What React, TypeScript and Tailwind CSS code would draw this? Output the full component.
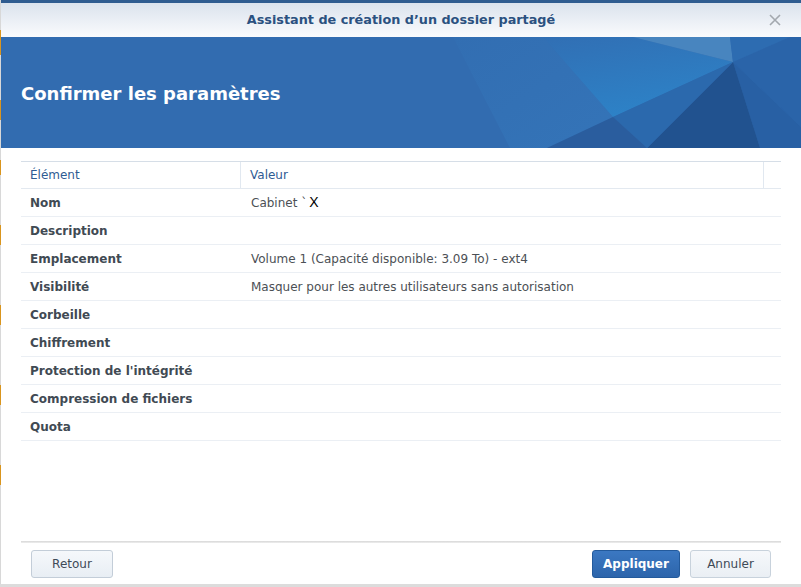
import React from "react";

const rows: [string, string, boolean?][] = [
  ["Nom", "Cabinet `", true],
  ["Description", ""],
  ["Emplacement", "Volume 1 (Capacité disponible: 3.09 To) - ext4"],
  ["Visibilité", "Masquer pour les autres utilisateurs sans autorisation"],
  ["Corbeille", ""],
  ["Chiffrement", ""],
  ["Protection de l'intégrité", ""],
  ["Compression de fichiers", ""],
  ["Quota", ""],
];

function Banner() {
  return (
    <svg className="absolute right-0 top-0" width="420" height="111" viewBox="0 0 420 111" preserveAspectRatio="none">
      <defs>
        <linearGradient id="gb" x1="0" y1="0" x2="0.4" y2="1">
          <stop offset="0" stopColor="#316fb4" />
          <stop offset="1" stopColor="#2d82c7" />
        </linearGradient>
        <linearGradient id="ga" x1="0" y1="0" x2="1" y2="1">
          <stop offset="0" stopColor="#326eb2" />
          <stop offset="1" stopColor="#3474b8" />
        </linearGradient>
      </defs>
      <polygon points="72,0 162,0 232,80 166,111 129,111" fill="url(#ga)" />
      <polygon points="162,0 252,0 352,25 232,80" fill="url(#gb)" />
      <polygon points="252,0 349,0 352,25" fill="#4885bf" />
      <polygon points="349,0 409,0 352,25" fill="#2d6cb1" />
      <polygon points="352,25 409,0 420,0 420,90" fill="#2a64a9" />
      <polygon points="352,25 420,90 420,111 379,111" fill="#2860a4" />
      <polygon points="352,25 379,111 266,111" fill="#21528f" />
      <polygon points="352,25 266,111 232,80" fill="#2b69ad" />
      <polygon points="232,80 166,111 266,111" fill="#2a5d9e" />
    </svg>
  );
}

export default function App() {
  return (
    <div className="w-[801px] h-[587px] bg-[#d4d4d4] flex flex-col" style={{ fontFamily: "Verdana, 'DejaVu Sans', sans-serif" }}>
      <div className="flex flex-1">
        <div className="w-px bg-[#d8d8d8] flex flex-col">
          <div className="h-[30px]" />
          <div className="h-[25px] bg-[#d9951e]" />
          <div className="h-[45px]" />
          <div className="h-[20px] bg-[#d9951e]" />
          <div className="h-[40px]" />
          <div className="h-[15px] bg-[#d9951e]" />
          <div className="h-[50px]" />
          <div className="h-[20px] bg-[#d9951e]" />
          <div className="h-[60px]" />
          <div className="h-[20px] bg-[#d9951e]" />
          <div className="h-[60px]" />
          <div className="h-[20px] bg-[#d9951e]" />
          <div className="h-[60px]" />
          <div className="h-[20px] bg-[#d9951e]" />
        </div>
        <div className="flex-1 bg-white flex flex-col">
          {/* Title bar */}
          <div className="h-[37px] border-t-[3px] border-[#2f5c90] bg-gradient-to-b from-[#dbe3ed] to-[#fafbfd] relative flex items-center justify-center">
            <span className="text-[12.8px] font-bold text-[#2b5180]" style={{ fontFamily: "'DejaVu Sans', Verdana, sans-serif" }}>
              Assistant de création d’un dossier partagé
            </span>
            <svg className="absolute right-[20px] top-[11px]" width="12" height="12" viewBox="0 0 12 12">
              <path d="M1 1 L11 11 M11 1 L1 11" stroke="#a3a8ae" strokeWidth="1.6" />
            </svg>
          </div>
          {/* Banner */}
          <div className="h-[111px] bg-[#326cb0] relative flex items-center pl-[20px] overflow-hidden">
            <Banner />
            <span className="relative text-[18px] font-bold text-white mt-[2px]" style={{ fontFamily: "'DejaVu Sans', Verdana, sans-serif" }}>
              Confirmer les paramètres
            </span>
          </div>
          {/* Table */}
          <div className="flex-1 px-[20px] pt-[13px] flex flex-col">
            <div className="border-t border-[#d6dee7] flex h-[28px] border-b border-b-[#e3e9f0] text-[12px] text-[#2f5b93]">
              <div className="w-[220px] border-r border-[#e1e8f0] pl-[9px] flex items-center">Élément</div>
              <div className="w-[523px] border-r border-[#e1e8f0] pl-[9px] flex items-center">Valeur</div>
              <div className="flex-1" />
            </div>
            {rows.map(([k, v, x]) => (
              <div key={k} className="flex h-[28px] border-b border-[#ebeff4] text-[12px] items-center">
                <div className="w-[220px] pl-[9px] font-bold text-[#414a53]">{k}</div>
                <div className="pl-[10px] text-[#4c5055] flex items-center">
                  {v}
                  {x && <span className="text-black text-[14px] ml-[2px]" style={{ fontFamily: "'Liberation Sans', Arial, sans-serif" }}>X</span>}
                </div>
              </div>
            ))}
            <div className="flex-1" />
            <div className="h-[2px] bg-gradient-to-b from-[#d7d7d7] to-[#eeeeee]" />
            <div className="h-[41px] flex items-start pt-[7px] pl-[10px] pr-[10px] text-[12px]">
              <button className="w-[82px] h-[28px] rounded-[3px] border border-[#c3cdd8] bg-gradient-to-b from-[#f5f8fb] to-[#e8eef4] text-[#3e4a57]">Retour</button>
              <div className="flex-1" />
              <button className="w-[88px] h-[28px] rounded-[3px] border border-[#235a9c] bg-gradient-to-b from-[#3b78c2] to-[#2d65ab] text-white font-bold">Appliquer</button>
              <button className="ml-[10px] w-[81px] h-[28px] rounded-[3px] border border-[#c8d2dc] bg-gradient-to-b from-[#f6f8fb] to-[#eaeff4] text-[#3e4a57]">Annuler</button>
            </div>
          </div>
        </div>
      </div>
      <div className="h-[3px] bg-[#dcdcdc]" />
    </div>
  );
}
